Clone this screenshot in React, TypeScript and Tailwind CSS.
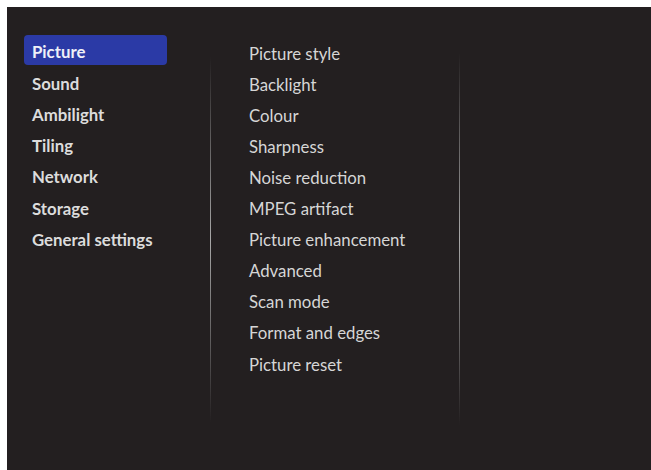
const leftItems = ["Picture", "Sound", "Ambilight", "Tiling", "Network", "Storage", "General settings"];

const rightItems = [
  "Picture style",
  "Backlight",
  "Colour",
  "Sharpness",
  "Noise reduction",
  "MPEG artifact",
  "Picture enhancement",
  "Advanced",
  "Scan mode",
  "Format and edges",
  "Picture reset",
];

// thin vertical separator that fades out at both ends
function Divider({ top, height }: { top: string; height: string }) {
  return (
    <div className={`w-px ${top} ${height} bg-gradient-to-b from-transparent via-[#a8a8a8] to-transparent`} />
  );
}

export default function App() {
  return (
    <div className="w-[651px] h-[470px] bg-white pl-[7px] pt-[7px] overflow-hidden">
      <div
        className="w-full h-full bg-[#231f20] flex items-start"
        style={{ fontFamily: "Lato, 'Open Sans', sans-serif" }}
      >
        {/* main menu */}
        <div className="w-[203px] pl-[17px] pt-[28px] shrink-0">
          {leftItems.map((item, i) => (
            <div
              key={item}
              className={`w-[143px] flex items-center pl-[8px] text-[16.8px] font-bold leading-none ${
                i === 0
                  ? "bg-[#2b3aa6] rounded-[4px] text-[#eef0f8] h-[30px] mb-[1.2px]"
                  : "h-[31.2px] text-[#dcdcdc]"
              }`}
            >
              <span className="pt-[5px]">{item}</span>
            </div>
          ))}
        </div>

        <Divider top="mt-[50px]" height="h-[366px]" />

        {/* sub menu */}
        <div className="w-[248px] pl-[38px] pt-[31.5px] shrink-0">
          {rightItems.map((item) => (
            <div
              key={item}
              className="h-[31.1px] flex items-center text-[16.8px] leading-none text-[#d6d6d6]"
            >
              {item}
            </div>
          ))}
        </div>

        <Divider top="mt-[46px]" height="h-[372px]" />
      </div>
    </div>
  );
}
